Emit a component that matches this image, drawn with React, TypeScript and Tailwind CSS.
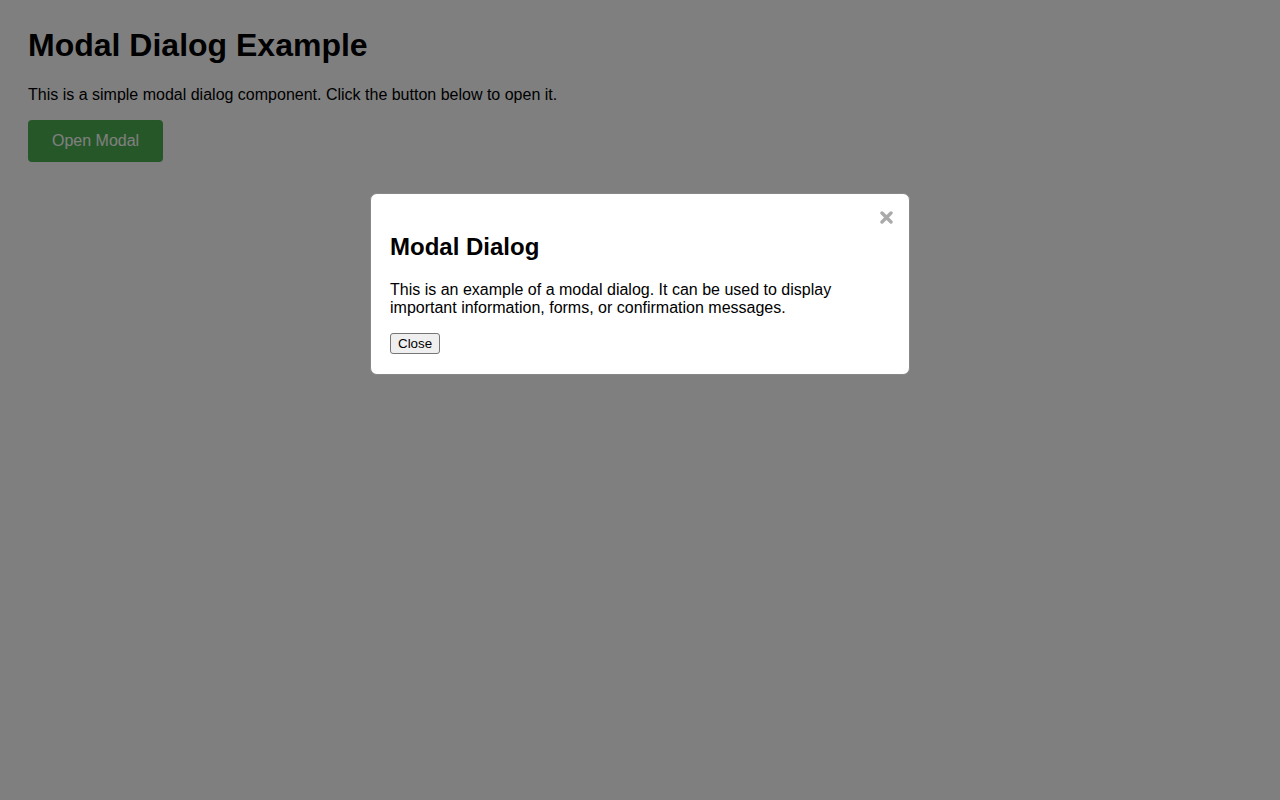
import { useState } from "react";

export default function App() {
  const [open, setOpen] = useState(true);

  return (
    <div className="min-h-[800px] bg-white px-[28px] pt-[27px] text-black" style={{ fontFamily: "'Liberation Sans', Arial, sans-serif" }}>
      <h1 className="text-[32px] font-bold leading-[37px]">Modal Dialog Example</h1>
      <p className="mt-[22px] text-[16px] leading-[18px]">
        This is a simple modal dialog component. Click the button below to open it.
      </p>
      <button
        onClick={() => setOpen(true)}
        className="mt-[16px] rounded-[4px] bg-[#4caf50] px-[24px] py-[12px] text-[16px] leading-[18px] text-white"
      >
        Open Modal
      </button>

      {open && (
        <div className="fixed inset-0 flex justify-center bg-black/50 pt-[193px]" onClick={() => setOpen(false)}>
          <div
            className="relative h-fit w-[540px] rounded-[7px] border border-[#888] bg-white p-[19px]"
            onClick={(e) => e.stopPropagation()}
          >
            {/* close cross */}
            <button onClick={() => setOpen(false)} className="absolute right-[16px] top-[17px] h-[13px] w-[13px]">
              <svg viewBox="0 0 13 13" width="13" height="13">
                <path d="M2 2 L11 11 M11 2 L2 11" stroke="#aaa" strokeWidth="3.4" strokeLinecap="round" />
              </svg>
            </button>
            <h2 className="mt-[20px] text-[24px] font-bold leading-[28px]">Modal Dialog</h2>
            <p className="mt-[20px] text-[16px] leading-[18px]">
              This is an example of a modal dialog. It can be used to display important information, forms, or
              confirmation messages.
            </p>
            <button
              onClick={() => setOpen(false)}
              className="mt-[16px] rounded-[3px] border border-[#767676] bg-[#efefef] px-[7px] py-[2px] text-[13.33px] leading-[15px]"
            >
              Close
            </button>
          </div>
        </div>
      )}
    </div>
  );
}
